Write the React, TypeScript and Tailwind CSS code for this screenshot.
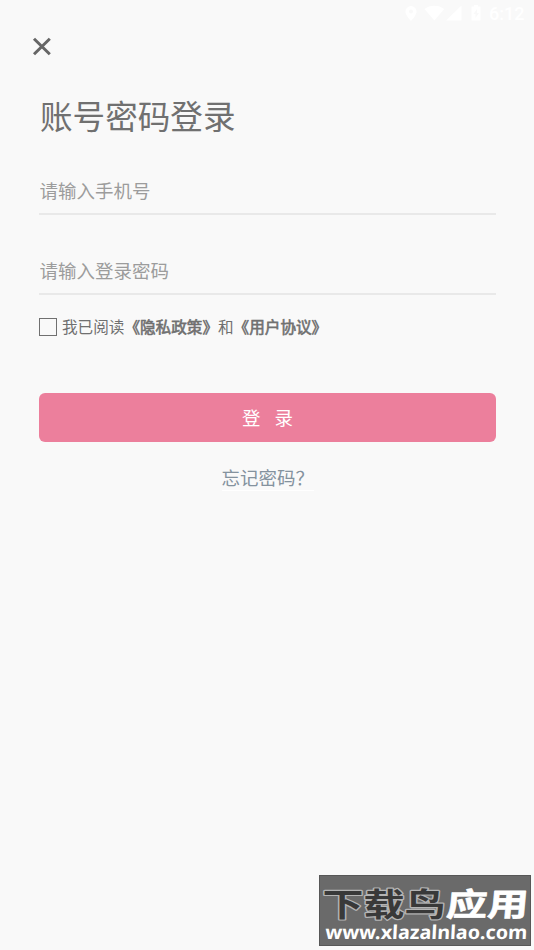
import { useState } from 'react';

function StatusBar() {
  return (
    <div className="flex h-7 items-center justify-end text-white">
      <svg className="h-7 w-[134px]" viewBox="0 0 134 28" fill="currentColor">
        <path
          fillRule="evenodd"
          d="M11 6a5.600 5.600 0 0 0-5.600 5.600C5.400 15.500 11 21 11 21s5.600-5.500 5.600-9.400A5.600 5.600 0 0 0 11 6zm0 3.600a2 2 0 1 1 0 4 2 2 0 0 1 0-4z"
        />
        <path d="M24.500 9C29.500 4.500 39 4.500 44.200 9L34.400 20.500z" />
        <path d="M46 20.500 61.500 5.500v15z" />
        <path
          fillRule="evenodd"
          d="M71.500 6.500H74V5h4v1.500h2.500v14h-9zM77 9l-3.500 5h2v4l3.500-5h-2z"
        />
        <text x="89" y="20" fontSize="18" fontWeight="500" fontFamily="Roboto, sans-serif">
          6:12
        </text>
      </svg>
    </div>
  );
}

interface FieldProps {
  placeholder: string;
  type: string;
}

function Field({ placeholder, type }: FieldProps) {
  return (
    <input
      type={type}
      placeholder={placeholder}
      className="block h-12 w-full border-b-2 border-[#e9e9e9] bg-transparent pl-[0.5px] text-[18.5px] text-[#707070] outline-none placeholder:text-[#9c9c9c] placeholder:opacity-100"
    />
  );
}

function Policy({ name }: { name: string }) {
  return <span className="[-webkit-text-stroke:0.6px_#707070]">《{name}》</span>;
}

function Watermark() {
  return (
    <div className="absolute top-[875px] left-[319px] h-[71px] w-[212px] border border-[#575757] bg-[#6a6a6a]">
      <svg className="block h-[69px] w-[210px]" viewBox="0 0 210 69">
        <g
          fontFamily="'Noto Sans CJK SC', sans-serif"
          fontSize="40"
          fontWeight="700"
          strokeLinejoin="round"
          transform="translate(2.500 39.500) scale(1.025 .8)"
        >
          <text fill="#393939" stroke="#b4b4b4" strokeWidth="3" paintOrder="stroke">
            下载鸟
          </text>
          <text x="120" fill="#fff" stroke="#fff" strokeWidth=".8" transform="skewX(-4)">
            应用
          </text>
        </g>
        <text
          fill="#fff"
          x="5"
          fontFamily="'Noto Sans', sans-serif"
          fontSize="19"
          fontWeight="700"
          textLength="202"
          lengthAdjust="spacingAndGlyphs"
          transform="translate(0 63) skewX(-3)"
        >
          www.xlazalnlao.com
        </text>
      </svg>
    </div>
  );
}

export default function App() {
  const [agreed, setAgreed] = useState(false);

  return (
    <div className="relative h-[950px] w-[534px] overflow-hidden bg-[#f9f9f9] font-['Noto_Sans_CJK_SC',sans-serif]">
      <StatusBar />

      <main className="pr-[38px] pl-[39px]">
        <button aria-label="关闭" className="-ml-[7px] mt-[9px] block h-5 w-5">
          <svg viewBox="0 0 20 20" className="h-5 w-5" stroke="#666" strokeWidth="3" fill="none">
            <path d="M2 1.800 17.800 17.200M17.800 1.800 2 17.200" />
          </svg>
        </button>

        <h1 className="mt-[34px] pl-px text-[32.6px] leading-[48px] text-[#707070]">账号密码登录</h1>

        <div className="mt-7 flex flex-col gap-8">
          <Field type="text" placeholder="请输入手机号" />
          <Field type="password" placeholder="请输入登录密码" />
        </div>

        <div className="mt-[18px] flex h-7 items-center text-[15.6px] text-[#707070]">
          <button
            role="checkbox"
            aria-checked={agreed}
            aria-label="同意"
            onClick={() => setAgreed(!agreed)}
            className={`-mt-px mr-[5px] h-[18px] w-[18px] border border-[#707070] ${agreed ? 'bg-[#ed7f9c]' : ''}`}
          />
          <span>我已阅读</span>
          <Policy name="隐私政策" />
          <span>和</span>
          <Policy name="用户协议" />
        </div>

        <button className="mt-[52px] block h-[49px] w-full rounded-md bg-[#ec7f9c] text-[18.5px] text-white">
          登<span className="ml-3.5">录</span>
        </button>

        <div className="mt-[19px] flex justify-center">
          <a className="h-[30px] w-[92px] border-b border-white text-[18.5px] leading-[32px] whitespace-nowrap text-[#84929e]">
            忘记密码？
          </a>
        </div>
      </main>

      <Watermark />
    </div>
  );
}
